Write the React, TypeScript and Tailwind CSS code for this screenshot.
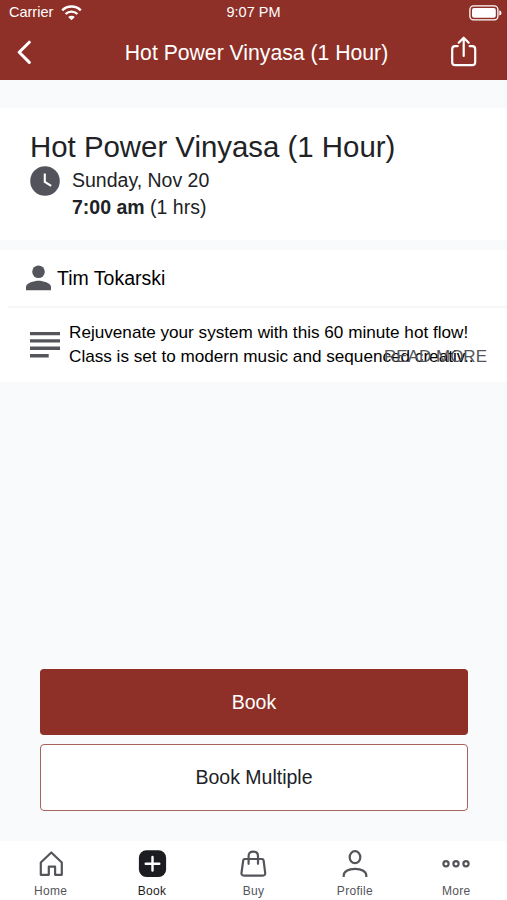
import type { ReactNode } from "react";
import clsx from "clsx";

interface Tab {
  label: string;
  icon: ReactNode;
  active?: boolean;
}

const tabs: Tab[] = [
  {
    label: "Home",
    icon: (
      <path
        d="M4.800 12.500 15.300 2.500l10.500 10v12.300h-6.700v-8.200h-6.300v8.200H4.800z"
        fill="none"
        stroke="currentColor"
        strokeWidth="2.200"
        strokeLinejoin="round"
      />
    ),
  },
  {
    label: "Book",
    active: true,
    icon: (
      <>
        <rect x="1.900" y="0.300" width="27.200" height="26.700" rx="7.500" fill="currentColor" />
        <path d="M15.500 7v13.600M8.700 13.800h13.600" stroke="#fff" strokeWidth="2.400" strokeLinecap="round" />
      </>
    ),
  },
  {
    label: "Buy",
    icon: (
      <g fill="none" stroke="currentColor" strokeWidth="2.200" strokeLinecap="round" strokeLinejoin="round">
        <path d="M6.900 9h17q1.500 0 1.700 1.500l1.600 12.300q.2 2.800-2.400 2.800H5.900q-2.600 0-2.400-2.800l1.700-12.300Q5.400 9 6.900 9z" />
        <path d="M10.600 13.800V6.200Q10.600 1.600 15.300 1.600T20 6.200V13.800" />
      </g>
    ),
  },
  {
    label: "Profile",
    icon: (
      <g fill="none" stroke="currentColor" strokeWidth="2.200">
        <ellipse cx="15" cy="7.200" rx="5.300" ry="6" />
        <path d="M3.700 27v-1.500c0-3.800 4.300-6.700 11.300-6.700s11.300 2.900 11.300 6.700V27" />
      </g>
    ),
  },
  {
    label: "More",
    icon: (
      <g fill="none" stroke="currentColor" strokeWidth="2.200">
        <circle cx="5" cy="13.700" r="2.600" />
        <circle cx="15" cy="13.700" r="2.600" />
        <circle cx="25" cy="13.700" r="2.600" />
      </g>
    ),
  },
];

function StatusBar() {
  return (
    <div className="grid h-[25px] grid-cols-3 items-center text-[14.5px] leading-[25px]">
      <div className="flex items-center gap-2 pl-[9px]">
        <span>Carrier</span>
        <svg width="21" height="16" viewBox="0 0 21 16" fill="none" stroke="currentColor" strokeWidth="2.4">
          <path d="M1.200 5.300a13.200 13.200 0 0 1 18.600 0" />
          <path d="M4.600 9a8.400 8.400 0 0 1 11.800 0" />
          <path d="M10.500 15.200 7.200 12a4.700 4.700 0 0 1 6.600 0z" fill="currentColor" stroke="none" />
        </svg>
      </div>
      <span className="text-center">9:07 PM</span>
      <svg className="mr-[5px] justify-self-end" width="33" height="16" viewBox="0 0 33 16">
        <rect x="0.900" y="0.900" width="28" height="14" rx="3.600" fill="none" stroke="currentColor" strokeWidth="1.300" />
        <rect x="3" y="3" width="23.800" height="9.800" rx="2" fill="currentColor" />
        <path d="M30.300 5.200q2.200.7 2.200 2.700t-2.200 2.700z" fill="currentColor" />
      </svg>
    </div>
  );
}

function Header() {
  return (
    <header className="h-20 shrink-0 bg-[#8e3027] text-white">
      <StatusBar />
      <div className="flex h-[54px] items-center justify-between pr-[30px] pl-4">
        <button aria-label="Back">
          <svg width="16" height="24" viewBox="0 0 16 24" fill="none" stroke="currentColor" strokeWidth="3">
            <path d="M13.300 2.200 3.200 12.300l10.100 10.100" strokeLinecap="round" strokeLinejoin="round" />
          </svg>
        </button>
        <h1 className="pt-[2px] pl-[31px] text-[21.200px] whitespace-nowrap">Hot Power Vinyasa (1 Hour)</h1>
        <button aria-label="Share">
          <svg
            width="27"
            height="32"
            viewBox="0 0 27 32"
            fill="none"
            stroke="currentColor"
            strokeWidth="2.200"
            strokeLinecap="round"
            strokeLinejoin="round"
          >
            <path d="M7.700 10.200H5.200q-3 0-3 3v13q0 3 3 3h17q3 0 3-3v-13q0-3-3-3h-2.500" />
            <path d="M13.700 20V2M8.700 6.700l5-5 5 5" />
          </svg>
        </button>
      </div>
    </header>
  );
}

function ClassSummary() {
  return (
    <section className="mt-7 h-[132px] bg-white pt-[22px] pl-[30px] text-[#202226]">
      <h2 className="text-[29.400px] leading-[34px]">Hot Power Vinyasa (1 Hour)</h2>
      <div className="flex gap-3 pt-[3px]">
        <svg className="-mt-px" width="30" height="30" viewBox="0 0 30 30">
          <circle cx="15" cy="15" r="14.800" fill="#53545b" />
          <path d="M14.800 7.500v8.300l6.400 4" fill="none" stroke="#fff" strokeWidth="2.100" />
        </svg>
        <div className="text-[19.500px] leading-[27px]">
          <p>Sunday, Nov 20</p>
          <p>
            <b>7:00 am</b> (1 hrs)
          </p>
        </div>
      </div>
    </section>
  );
}

function ClassDetails() {
  return (
    <section className="mt-[10px] h-[132px] bg-white text-black">
      <div className="ml-2 flex h-[58px] items-center gap-[6px] border-b-2 border-[#f5f6f7] pl-[18px]">
        <svg width="25" height="26" viewBox="0 0 25 26" fill="#53555a">
          <circle cx="12.500" cy="6.700" r="6.300" />
          <path d="M0 25.200v-3.100c0-4.100 8.300-6.300 12.500-6.300S25 18 25 22.100v3.100z" />
        </svg>
        <span className="pt-[2px] text-[19.500px]">Tim Tokarski</span>
      </div>
      <div className="relative flex gap-[9px] pt-3 pl-[30px]">
        <svg className="mt-[11px]" width="30" height="28" viewBox="0 0 30 28" fill="#53555a">
          <path d="M0 .9h30v3.400H0zM0 8.200h30v3.400H0zM0 15.600h30V19H0zM0 23h18.700v3.400H0z" />
        </svg>
        <p className="text-[17.150px] leading-[24px] whitespace-nowrap">
          Rejuvenate your system with this 60 minute hot flow!
          <br />
          Class is set to modern music and sequenced creativ..
        </p>
        <button className="absolute top-[36px] right-5 text-[17px] leading-[25px] text-[#53555a]">READ MORE</button>
      </div>
    </section>
  );
}

function TabBar() {
  return (
    <nav className="grid h-[59px] shrink-0 grid-cols-5 bg-white">
      {tabs.map((tab) => (
        <button
          key={tab.label}
          className={clsx("flex flex-col items-center pt-[9px]", tab.active ? "text-[#1c1d20]" : "text-[#53555a]")}
        >
          <svg width="30" height="28" viewBox="0 0 30 28">
            {tab.icon}
          </svg>
          <span className="pt-[5px] text-[12px] leading-4 tracking-[0.300px]">{tab.label}</span>
        </button>
      ))}
    </nav>
  );
}

export default function App() {
  return (
    <div className="flex h-[900px] w-[507px] flex-col overflow-hidden bg-[#f8fafc] font-['Liberation_Sans',Arial,sans-serif]">
      <Header />
      <main className="flex flex-1 flex-col">
        <ClassSummary />
        <ClassDetails />
        <div className="mt-auto flex flex-col gap-[9px] pr-[39px] pb-[30px] pl-10 text-[19.500px]">
          <button className="h-[66px] rounded-[4px] bg-[#8e3027] pt-[2px] text-white">Book</button>
          <button className="h-[67px] rounded-[4px] border-[1.500px] border-[#a9635d] bg-white pt-px text-[#202226]">
            Book Multiple
          </button>
        </div>
      </main>
      <TabBar />
    </div>
  );
}
